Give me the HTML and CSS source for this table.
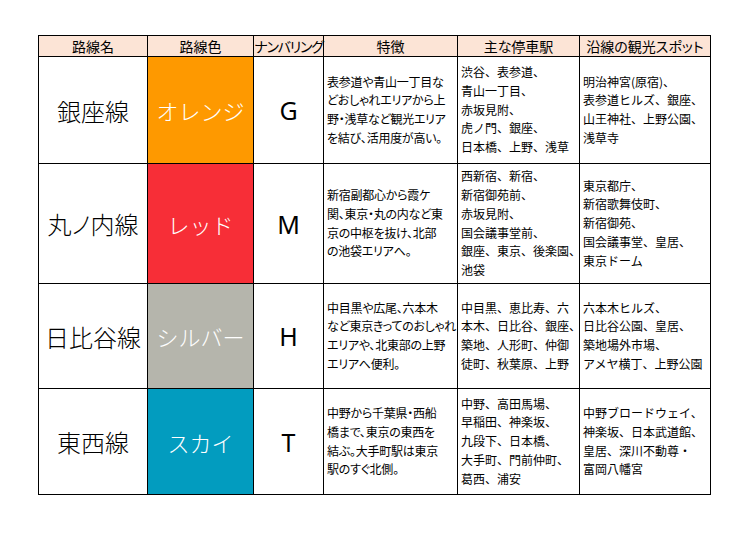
FILE: index.html
```html
<!DOCTYPE html>
<html lang="ja">
<head>
<meta charset="utf-8">
<title>東京メトロ路線</title>
<link rel="stylesheet" href="styles.css">
</head>
<body>
<table class="lines">
  <colgroup>
    <col class="c-name"><col class="c-color"><col class="c-num"><col class="c-feat"><col class="c-sta"><col class="c-spot">
  </colgroup>
  <thead>
    <tr class="head">
      <th>路線名</th><th>路線色</th><th><span class="squeeze">ナンバリング</span></th><th>特徴</th><th>主な停車駅</th><th>沿線の観光スポット</th>
    </tr>
  </thead>
  <tbody>
    <tr class="r1">
      <td class="name">銀座線</td>
      <td class="swatch orange">オレンジ</td>
      <td class="code">G</td>
      <td class="txt feat">表参道や青山一丁目な<br>どおしゃれエリアから上<br>野・浅草など観光エリア<br>を結び、活用度が高い。</td>
      <td class="txt">渋谷、表参道、<br>青山一丁目、<br>赤坂見附、<br>虎ノ門、銀座、<br>日本橋、上野、浅草</td>
      <td class="txt">明治神宮(原宿)、<br>表参道ヒルズ、銀座、<br>山王神社、上野公園、<br>浅草寺</td>
    </tr>
    <tr class="r2">
      <td class="name">丸ノ内線</td>
      <td class="swatch red">レッド</td>
      <td class="code">M</td>
      <td class="txt feat">新宿副都心から霞ケ<br>関、東京・丸の内など東<br>京の中枢を抜け、北部<br>の池袋エリアへ。</td>
      <td class="txt">西新宿、新宿、<br>新宿御苑前、<br>赤坂見附、<br>国会議事堂前、<br>銀座、東京、後楽園、<br>池袋</td>
      <td class="txt">東京都庁、<br>新宿歌舞伎町、<br>新宿御苑、<br>国会議事堂、皇居、<br>東京ドーム</td>
    </tr>
    <tr class="r3">
      <td class="name">日比谷線</td>
      <td class="swatch silver">シルバー</td>
      <td class="code">H</td>
      <td class="txt feat">中目黒や広尾、六本木<br>など東京きってのおしゃれ<br>エリアや、北東部の上野<br>エリアへ便利。</td>
      <td class="txt">中目黒、恵比寿、六<br>本木、日比谷、銀座、<br>築地、人形町、仲御<br>徒町、秋葉原、上野</td>
      <td class="txt">六本木ヒルズ、<br>日比谷公園、皇居、<br>築地場外市場、<br>アメヤ横丁、上野公園</td>
    </tr>
    <tr class="r4">
      <td class="name">東西線</td>
      <td class="swatch sky">スカイ</td>
      <td class="code">T</td>
      <td class="txt feat">中野から千葉県・西船<br>橋まで、東京の東西を<br>結ぶ。大手町駅は東京<br>駅のすぐ北側。</td>
      <td class="txt">中野、高田馬場、<br>早稲田、神楽坂、<br>九段下、日本橋、<br>大手町、門前仲町、<br>葛西、浦安</td>
      <td class="txt">中野ブロードウェイ、<br>神楽坂、日本武道館、<br>皇居、深川不動尊・<br>富岡八幡宮</td>
    </tr>
  </tbody>
</table>
</body>
</html>
```

FILE: styles.css
```css
html, body {
  margin: 0;
  padding: 0;
  background: #ffffff;
}

body {
  width: 750px;
  height: 536px;
  font-family: "Noto Sans CJK JP", "Noto Sans", sans-serif;
  color: #000;
}

.lines {
  margin: 35px 0 0 38px;
  border-collapse: collapse;
  table-layout: fixed;
  width: 673px;
}

.c-name { width: 109px; }
.c-color { width: 106px; }
.c-num { width: 70px; }
.c-feat { width: 134px; }
.c-sta { width: 122px; }
.c-spot { width: 131px; }

.lines th,
.lines td {
  border: 1px solid #000;
  padding: 0;
  vertical-align: middle;
}

.head th {
  height: 20px;
  background: #fce4d6;
  font-weight: normal;
  font-size: 14px;
  line-height: 20px;
  text-align: center;
  white-space: nowrap;
  font-feature-settings: "palt" 1;
}

.squeeze {
  letter-spacing: -1.2px;
}

.r1 td { height: 106px; }
.r2 td { height: 119px; }
.r3 td { height: 104px; }
.r4 td { height: 105px; }

.name {
  font-size: 24px;
  font-weight: 300;
  text-align: center;
  white-space: nowrap;
  font-feature-settings: "palt" 1;
}

.swatch {
  font-size: 22px;
  font-weight: 300;
  color: #ffffff;
  text-align: center;
  white-space: nowrap;
}

.orange { background: #fe9900; }
.red { background: #f72e37; }
.silver { background: #b5b5ac; }
.sky { background: #029cbf; }

.code {
  font-family: "Noto Sans", "DejaVu Sans", sans-serif;
  font-size: 25px;
  text-align: center;
}

.txt {
  font-size: 12px;
  line-height: 18.7px;
  text-align: left;
  white-space: nowrap;
  padding-left: 3px !important;
}

.feat {
  font-feature-settings: "palt" 1;
  letter-spacing: -0.25px;
}
```
